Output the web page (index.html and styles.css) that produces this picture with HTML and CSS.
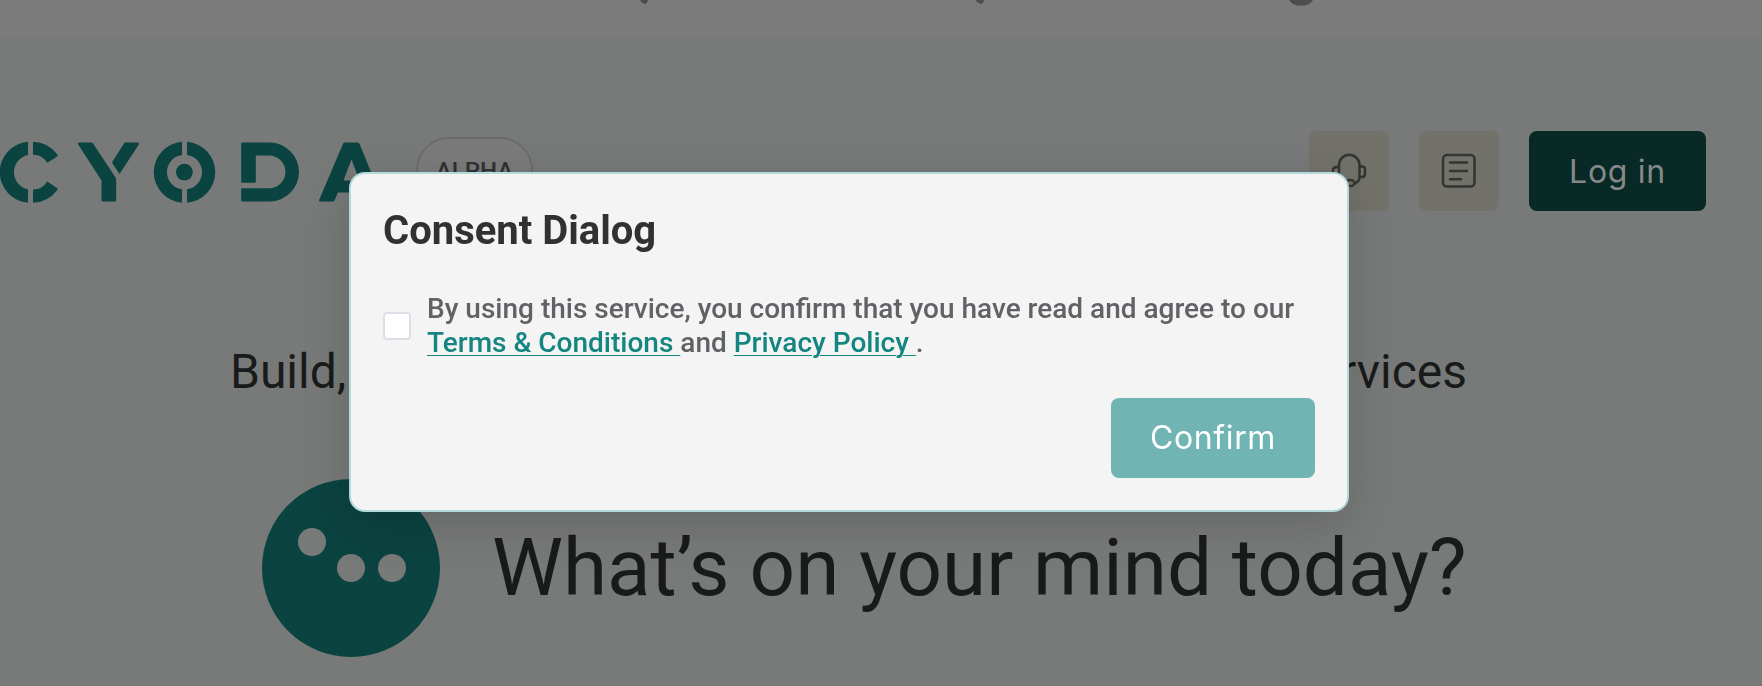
FILE: index.html
```html
<!DOCTYPE html>
<html lang="en">
<head>
<meta charset="utf-8">
<title>Cyoda</title>
<link rel="stylesheet" href="styles.css">
</head>
<body>
<div class="page">
  <div class="banner">
    <svg width="1762" height="36" viewBox="0 0 1762 36"><path d="M640.500 0H648Q648 2.500 645 4.300L640.500 1.500ZM976.300 0H984Q984 2.500 981 4.300L976.300 1.500ZM1289 0H1313Q1309.500 5.800 1301 5.800T1289 0Z"/></svg>
  </div>
  <header class="header">
    <svg class="logo" width="380" height="62" viewBox="0 -0.500 380 62">
      <path d="M28 .2A30.590 30.590 0 0 0 28 61.200V47.800A17.500 17.500 0 0 1 28 13.500ZM33 .2A31 31 0 0 1 56.900 12.600Q58.300 14.300 56.900 15.200L47.300 21.300A17 17 0 0 0 33 13.300ZM33 61.200A31 31 0 0 0 56.900 49Q58.300 47.300 56.900 46.400L47.300 40A17 17 0 0 1 33 48.100Z"/>
      <path d="M79.500 1H91Q92.500 1 93.300 2.200L115.500 36Q116.200 37 116.200 38.500V58.500Q116.200 60 114.700 60H103Q101.500 60 101.500 58.500V39L78.300 3.200Q77.500 1 79.500 1ZM125.500 1H137.500Q140 1 138.800 3L119.500 32.500L112.500 22Q112 21 112.500 20L124 2Q124.600 1 125.500 1Z"/>
      <path d="M182 .2A30.590 30.590 0 0 0 182 61.200V47.800A17.300 17.300 0 0 1 182 13.500ZM187 .2A30.590 30.590 0 0 1 187 61.200V47.800A17.300 17.300 0 0 0 187 13.500Z"/>
      <circle cx="184.400" cy="30.700" r="8.400"/>
      <path d="M242.500 1H269.500A29.500 29.500 0 0 1 269.500 60H242.500Q241.200 60 241.200 58.700V46.800H269A16.300 16.300 0 0 0 269 14H255.800V41.300H241.200V2.300Q241.200 1 242.500 1Z"/>
      <path fill-rule="evenodd" d="M345 1H357.500Q359 1 359.600 2.500L383 60H368L364.500 51H338L334.500 59Q334 60 333 60H320.500Q318.500 60 319.200 58.200L343 2.300Q343.600 1 345 1ZM351.500 18L343.500 39H359.500Z"/>
    </svg>
    <span class="badge">ALPHA</span>
    <div class="actions">
      <button class="icon-button">
        <svg width="36" height="36" viewBox="0 0 36 36"><path d="M8 23V12A10 10 0 0 1 28.500 12V25Q28.500 28 24 30.500M8 14H6Q2 14 2 17V21Q2 24 6 24H8M28.500 13.500H31Q34 13.500 34 16.500V21Q34 24 31 24H28.500M8 23Q8 28 14 31"/><ellipse cx="19" cy="30" rx="4.500" ry="3"/></svg>
      </button>
      <button class="icon-button">
        <svg width="36" height="36" viewBox="0 0 36 36"><rect x="2" y="2" width="31.500" height="31.500" rx="4"/><path d="M9 9.500H26M9 18H26M9 26.300H20"/></svg>
      </button>
      <button class="login">Log in</button>
    </div>
  </header>
  <main class="main">
    <h2 class="subtitle"><span>Build,</span><span>services</span></h2>
    <div class="prompt">
      <svg class="face" width="178" height="178" viewBox="0 0 178 178"><circle cx="89" cy="89" r="89"/><g class="dots"><circle cx="50" cy="63" r="14"/><circle cx="89" cy="89" r="14"/><circle cx="130" cy="89" r="14"/></g></svg>
      <h1 class="question">What’s on your mind today?</h1>
    </div>
  </main>
</div>
<div class="overlay">
  <section class="dialog" role="dialog">
    <h3 class="dialog-title">Consent Dialog</h3>
    <label class="consent">
      <span class="checkbox"></span>
      <span class="consent-text">By using this service, you confirm that you have read and agree to our<br><a class="link">Terms &amp; Conditions </a>and <a class="link">Privacy Policy </a>.</span>
    </label>
    <div class="dialog-footer"><button class="confirm">Confirm</button></div>
  </section>
</div>
</body>
</html>
```
FILE: styles.css
```css
* { box-sizing: border-box; }
body { margin: 0; font-family: Roboto, sans-serif; overflow: hidden; }
button { border: 0; padding: 0; font-family: Inter, sans-serif; }
.page { height: 686px; background: #787a79; overflow: hidden; color: #191b1a; }
.banner { height: 36px; background: #7b7b7b; overflow: hidden; }
.banner svg { display: block; fill: #4d4d4f; }
.header { height: 178px; padding: 95px 56px 0 0; display: flex; align-items: flex-start; }
.logo { flex: none; margin-top: 10px; fill: #0b4340; }
.badge { flex: none; width: 117px; height: 66px; margin: 6px 0 0 36px; border: 2px solid #6b6d6c; border-radius: 33px; background: #7b7b7b; color: #303132; font-size: 24px; font-weight: 500; line-height: 64px; text-align: center; }
.actions { margin-left: auto; display: flex; gap: 30px; }
.icon-button { width: 80px; height: 80px; border-radius: 8px; background: #73726a; display: flex; align-items: center; justify-content: center; }
.icon-button svg { fill: none; stroke: #343434; stroke-width: 2.500; stroke-linecap: round; stroke-linejoin: round; }
.login { width: 177px; height: 80px; border-radius: 8px; background: #082925; color: #858989; font-size: 32px; letter-spacing: .7px; }
.main { padding-top: 130px; }
.subtitle { margin: 0 295px 0 230px; display: flex; justify-content: space-between; font-size: 48px; line-height: 56px; font-weight: 400; white-space: nowrap; }
.prompt { display: flex; align-items: center; padding: 79px 0 0 262px; gap: 52px; }
.face { flex: none; fill: #0b4340; }
.dots { fill: #787a79; }
.question { margin: 0; font-size: 80px; font-weight: 400; line-height: 94px; white-space: nowrap; }
.overlay { position: fixed; inset: 0; padding: 172px 0 0 349px; }
.dialog { width: 1000px; height: 340px; padding: 32px; border: 2px solid #b4d9db; border-radius: 16px; background: #f4f4f4; box-shadow: 0 12px 48px rgba(0,0,0,.16); display: flex; flex-direction: column; }
.dialog-title { margin: 0; padding-top: 1px; font-size: 40px; line-height: 48px; font-weight: 700; color: #303133; }
.consent { display: flex; align-items: center; gap: 16px; margin-top: 37px; }
.checkbox { width: 28px; height: 28px; border: 2px solid #dcdfe6; border-radius: 4px; background: #fff; }
.consent-text { font-size: 28px; line-height: 34px; font-weight: 500; color: #606266; white-space: nowrap; }
.link { color: #148580; text-decoration: underline; text-decoration-thickness: 1px; text-underline-offset: 3px; }
.dialog-footer { margin-top: auto; display: flex; justify-content: flex-end; }
.confirm { width: 204px; height: 80px; padding-bottom: 2px; border-radius: 8px; background: #70b5b3; color: #fff; font-size: 32px; letter-spacing: .6px; }
```
